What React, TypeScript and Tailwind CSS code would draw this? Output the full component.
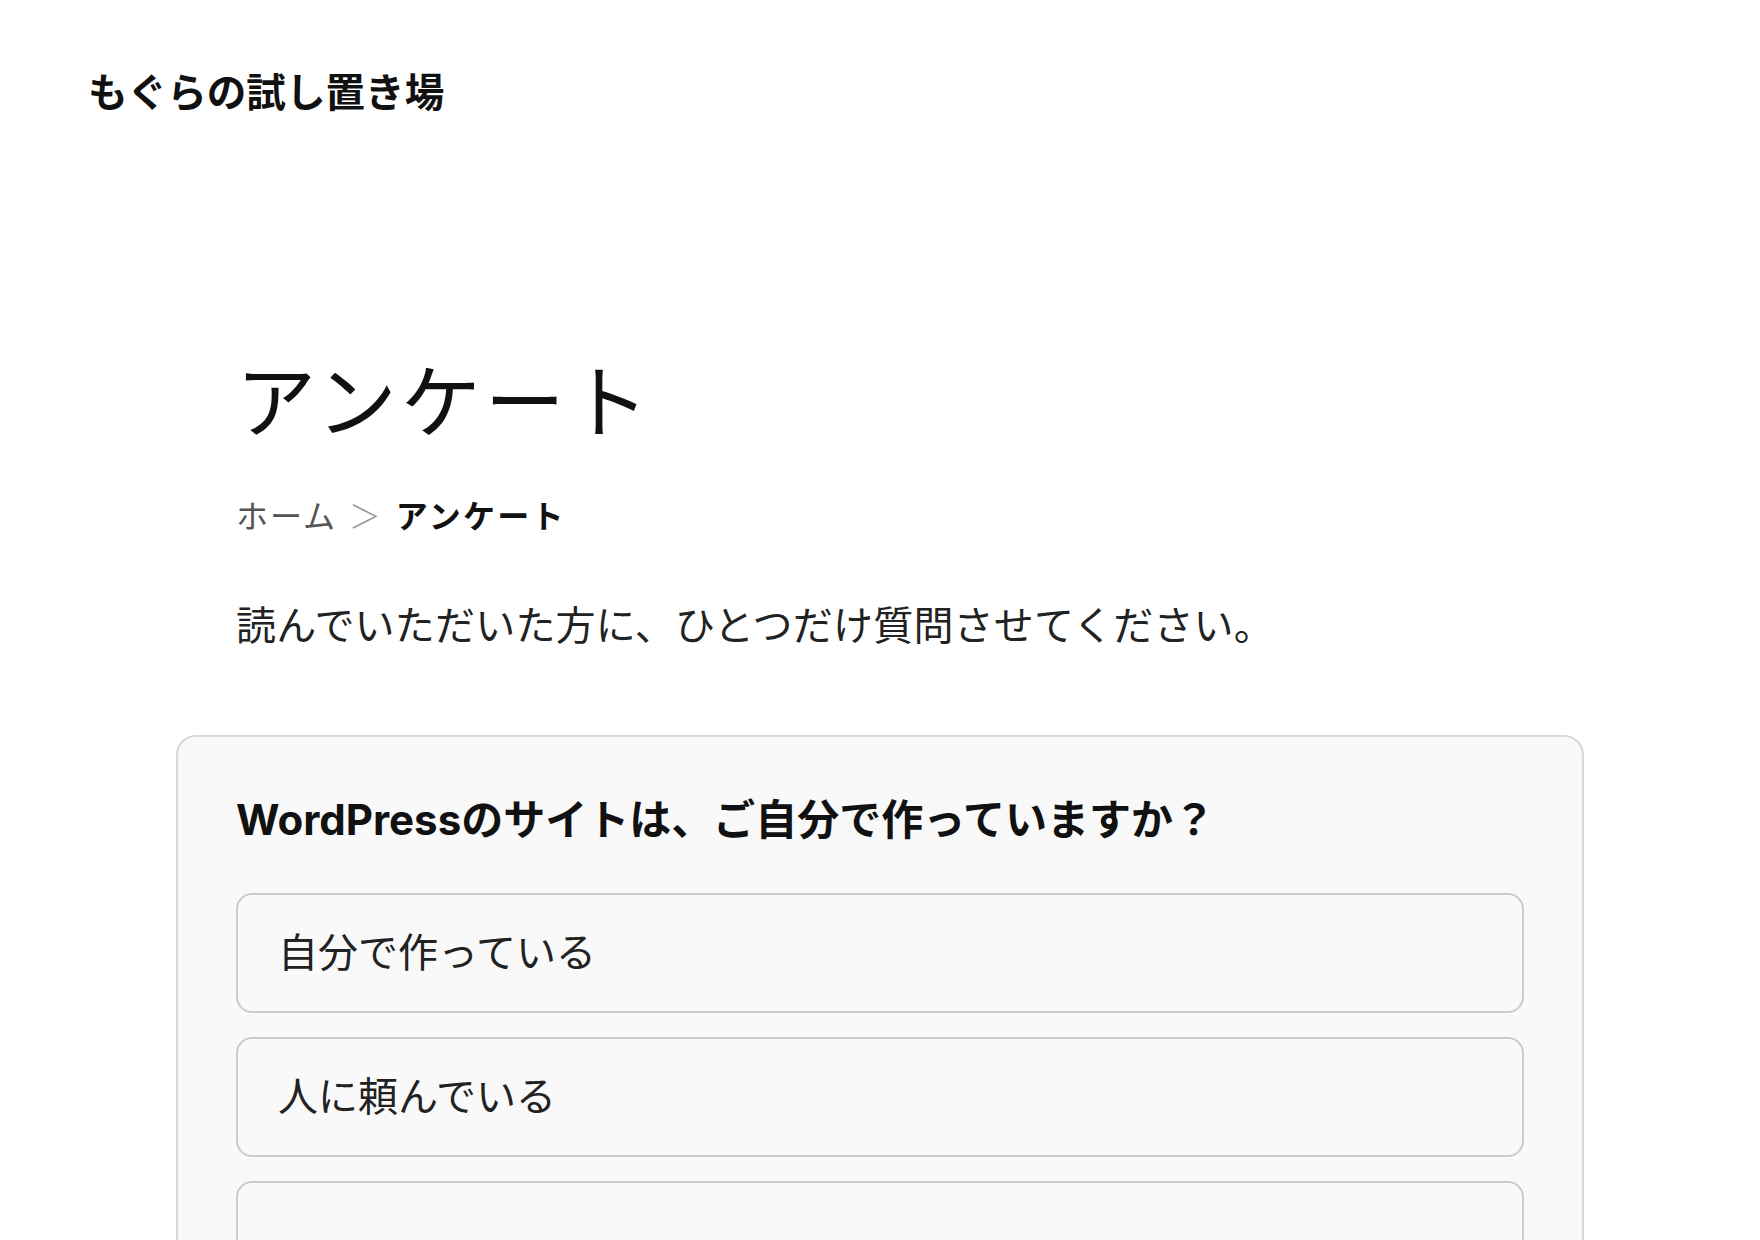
import React from "react";

const font = {
  fontFamily: 'Inter, "Noto Sans CJK JP", "Noto Sans", sans-serif',
};

export default function App() {
  const options = ["自分で作っている", "人に頼んでいる", ""];
  return (
    <div className="min-h-[1240px] bg-white text-[#111111]" style={font}>
      <header className="pl-[88px] pt-[63px]">
        <div className="text-[39.6px] font-bold leading-[60px]">もぐらの試し置き場</div>
      </header>
      <main className="mx-auto w-[1288px]">
        <h1 className="mt-[231px] text-[80px] font-normal leading-[96px] tracking-[0.05em]">アンケート</h1>
        <nav className="mt-[43px] flex items-center text-[32px] leading-[48px] tracking-[0.06em]">
          <span className="text-[#555555]">ホーム</span>
          <span className="ml-[12px] mr-[13px] font-light text-[#999999]">＞</span>
          <span className="font-bold tracking-[0.07em] text-[#111111]">アンケート</span>
        </nav>
        <p className="mt-[55px] text-[40px] leading-[60px] tracking-[0.005em] text-[#222222]">
          読んでいただいた方に、ひとつだけ質問させてください。
        </p>
        <section className="-mx-[60px] mt-[79px] rounded-[20px] border-2 border-[#d9d9d9] bg-[#f9f9f9] px-[58px] pt-[51px] pb-[60px]">
          <h2 className="text-[42px] font-bold leading-[63px]">WordPressのサイトは、ご自分で作っていますか？</h2>
          <div className="mt-[42px] flex flex-col gap-[24px]">
            {options.map((t, i) => (
              <div
                key={i}
                className="flex h-[120px] items-center rounded-[16px] border-2 border-[#cccccc] bg-[#f9f9f9] px-[40px] text-[40px] text-[#222222]"
              >
                {t}
              </div>
            ))}
          </div>
        </section>
      </main>
    </div>
  );
}
